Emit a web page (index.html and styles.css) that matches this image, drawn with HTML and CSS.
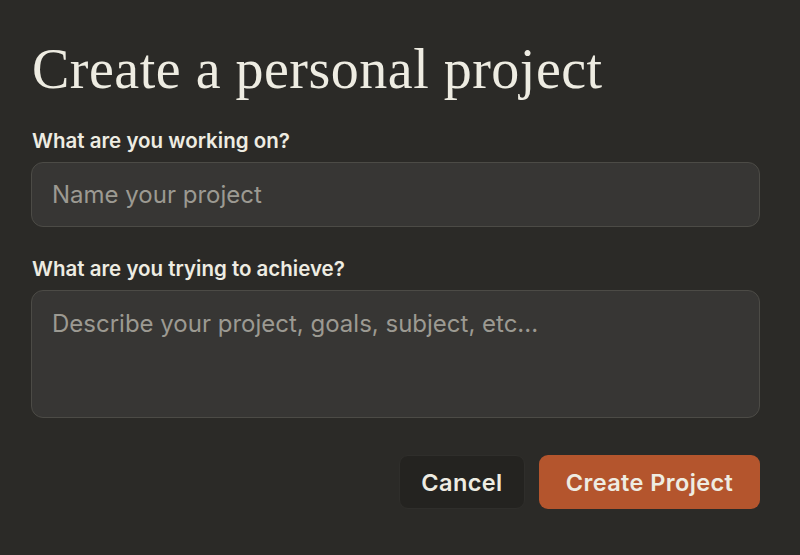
FILE: index.html
```html
<!DOCTYPE html>
<html>
<head>
<meta charset="utf-8">
<link rel="stylesheet" href="styles.css">
</head>
<body>
<div class="page">
  <h1 class="title">Create a personal project</h1>
  <div class="field">
    <label class="label">What are you working on?</label>
    <input class="input" type="text" placeholder="Name your project">
  </div>
  <div class="field">
    <label class="label">What are you trying to achieve?</label>
    <textarea class="input area" placeholder="Describe your project, goals, subject, etc..."></textarea>
  </div>
  <div class="actions">
    <button class="btn cancel">Cancel</button>
    <button class="btn primary">Create Project</button>
  </div>
</div>
</body>
</html>
```
FILE: styles.css
```css
html, body {
  margin: 0;
  padding: 0;
  background: #2b2a27;
  width: 800px;
  height: 555px;
  overflow: hidden;
}
.page {
  padding: 38px 40px 0 31px;
  display: flex;
  flex-direction: column;
  font-family: "Inter", "Noto Sans", sans-serif;
}
.title {
  margin: 0 0 0 1px;
  font-family: "Liberation Serif", serif;
  font-weight: 400;
  font-size: 56px;
  line-height: 62px;
  letter-spacing: 0.5px;
  color: #eeece2;
}
.field {
  display: flex;
  flex-direction: column;
  margin-top: 29px;
}
.field + .field { margin-top: 30px; }
.label {
  font-size: 20.5px;
  font-weight: 600;
  color: #eeece2;
  margin-left: 1px;
  margin-bottom: 9px;
  line-height: 24px;
}
.input {
  box-sizing: border-box;
  height: 65px;
  background: #373634;
  border: 1.5px solid #4c4b46;
  border-radius: 12px;
  padding: 0 20px;
  font-family: "Inter", sans-serif;
  font-size: 24px;
  color: #eeece2;
  outline: none;
}
.input::placeholder { color: #9c9a92; }
.area {
  height: 128px;
  padding-top: 18px;
  resize: none;
  line-height: 30px;
}
.actions {
  display: flex;
  justify-content: flex-end;
  gap: 14px;
  margin-top: 37px;
}
.btn {
  height: 54px;
  border-radius: 9px;
  border: none;
  font-family: "Inter", sans-serif;
  font-weight: 600;
  font-size: 23.5px;
  letter-spacing: 0.4px;
  color: #eeece2;
  padding: 0;
}
.cancel {
  background: #242320;
  border: 1px solid #2f2e2b;
  width: 126px;
}
.primary {
  background: #b4552d;
  width: 221px;
}
```
